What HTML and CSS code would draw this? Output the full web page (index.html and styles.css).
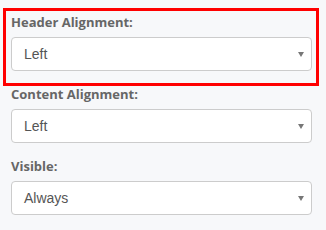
FILE: index.html
```html
<!doctype html>
<html>
  <head>
    <title>Column settings</title>
    <link rel="stylesheet" href="styles.css">
  </head>
  <body>
    <div class="panel">
      <div class="field field_highlight">
        <label class="field_label">Header Alignment:</label>
        <div class="select_box">
          <span class="select_value">Left</span>
          <span class="select_arrow"></span>
        </div>
      </div>
      <div class="field">
        <label class="field_label">Content Alignment:</label>
        <div class="select_box">
          <span class="select_value">Left</span>
          <span class="select_arrow"></span>
        </div>
      </div>
      <div class="field">
        <label class="field_label">Visible:</label>
        <div class="select_box">
          <span class="select_value">Always</span>
          <span class="select_arrow"></span>
        </div>
      </div>
    </div>
  </body>
</html>
```

FILE: styles.css
```css
body {
  margin: 0;
  background-color: #f7f8fa;
}

.panel {
  padding: 11px 10px 0 6px;
}

.field {
  padding: 2px 4px 12px 5px;
}

.field_highlight {
  outline: 3px solid #ff0000;
}

.field_label {
  display: block;
  font-family: "Open Sans", sans-serif;
  font-weight: bold;
  font-size: 13px;
  line-height: 18px;
  color: #666666;
  margin-bottom: 6px;
}

.select_box {
  display: flex;
  align-items: center;
  justify-content: space-between;
  height: 34px;
  box-sizing: border-box;
  border: 1px solid #cccccc;
  border-radius: 4px;
  background-color: white;
  padding: 0 7px 0 12px;
}

.select_value {
  font-family: "Liberation Sans", Arial, sans-serif;
  font-size: 14px;
  color: #555555;
}

.select_arrow {
  width: 0;
  height: 0;
  border-left: 3.5px solid transparent;
  border-right: 3.5px solid transparent;
  border-top: 5px solid #777777;
}
```
